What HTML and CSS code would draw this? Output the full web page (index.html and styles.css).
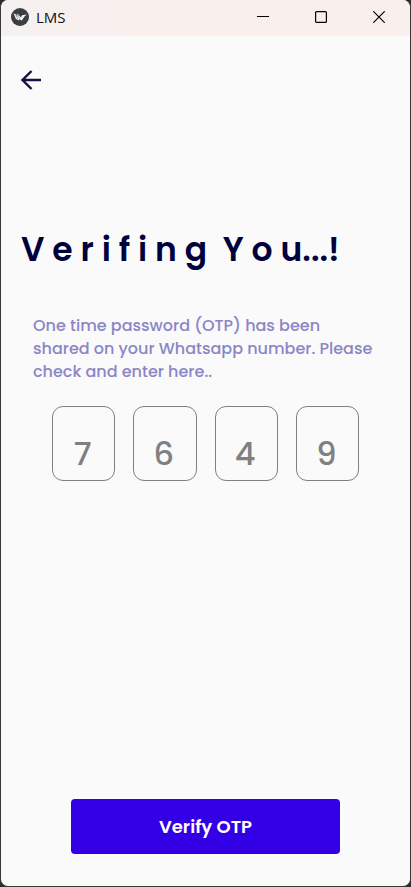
FILE: index.html
```html
<!DOCTYPE html>
<html lang="en">
<head>
<meta charset="utf-8">
<meta name="viewport" content="width=device-width, initial-scale=1">
<title>LMS</title>
<link rel="stylesheet" href="styles.css">
</head>
<body>
<div class="window">
  <header class="titlebar">
    <svg class="logo" viewBox="0 0 18 18" aria-hidden="true">
      <circle cx="9" cy="9" r="9" fill="#3c3f42"/>
      <path d="M2.6 5.5 5 6.2 6.5 9 6.3 5.2 10 9.5 11 7.2 15.8 6.6 13.5 8.6 10.8 12.4 8.2 11.2 7.6 12.6 4.8 10.8Z" fill="#f4f4f4"/>
      <path d="M4.4 6.2 6.8 11.2M7.1 6.4 8.6 10.6" stroke="#777" stroke-width=".5" fill="none"/>
    </svg>
    <span class="app-name">LMS</span>
    <div class="controls">
      <button type="button" aria-label="Minimize"><svg viewBox="0 0 12 12"><path d="M0 5.5h12"/></svg></button>
      <button type="button" aria-label="Maximize"><svg viewBox="0 0 12 12"><rect x=".6" y=".6" width="10.8" height="10.8" rx="1"/></svg></button>
      <button type="button" aria-label="Close"><svg viewBox="0 0 12 12"><path d="M.3.3l11.4 11.4M11.7.3.3 11.7"/></svg></button>
    </div>
  </header>
  <main class="screen">
    <button class="back" type="button" aria-label="Back">
      <svg viewBox="0 0 20 20"><path d="M20 10H1.5M10.5 1 1.5 10l9 9"/></svg>
    </button>
    <h1>V e r i f i n g &nbsp;Y o u...!</h1>
    <p class="hint">One time password (OTP) has been shared on your Whatsapp number. Please check and enter here..</p>
    <form class="otp-form">
      <div class="digits">
        <input type="text" inputmode="numeric" maxlength="1" value="7" aria-label="Digit 1">
        <input type="text" inputmode="numeric" maxlength="1" value="6" aria-label="Digit 2">
        <input type="text" inputmode="numeric" maxlength="1" value="4" aria-label="Digit 3">
        <input type="text" inputmode="numeric" maxlength="1" value="9" aria-label="Digit 4">
      </div>
      <button class="verify" type="submit">Verify OTP</button>
    </form>
  </main>
</div>
</body>
</html>
```
FILE: styles.css
```css
* {
  box-sizing: border-box;
}

body {
  margin: 0;
  background: #2b2b2d;
  font-family: Poppins, Inter, "Open Sans", sans-serif;
  font-weight: 500;
}

button {
  border: 0;
  padding: 0;
  background: none;
  font: inherit;
}

.window {
  display: flex;
  flex-direction: column;
  min-height: 100vh;
  border: 1px solid #38383a;
  border-top: 0;
  border-radius: 8px;
  background: #fafafa;
  overflow: hidden;
}

.titlebar {
  display: flex;
  align-items: center;
  height: 36px;
  padding: 0 2px 2px 10px;
  background: linear-gradient(90deg, #f4f1f0, #f9f0ee 30%);
}

.logo {
  width: 18px;
  height: 18px;
}

.app-name {
  margin-left: 7px;
  font: 15px/20px "Open Sans", sans-serif;
  color: #111;
}

.controls {
  display: flex;
  margin-left: auto;
}

.controls button {
  display: grid;
  place-items: center;
  width: 58px;
  height: 34px;
}

.controls svg {
  width: 12px;
  height: 12px;
  fill: none;
  stroke: #000;
  stroke-width: 1.2;
}

.screen {
  display: flex;
  flex: 1;
  flex-direction: column;
  padding: 32px 20px;
}

.back {
  width: 24px;
  height: 24px;
}

.back svg {
  display: block;
  width: 20px;
  height: 20px;
  fill: none;
  stroke: #1a0f42;
  stroke-width: 2.4;
}

h1 {
  margin: 133px 0 0;
  font-size: 33px;
  font-weight: 600;
  line-height: 50px;
  color: #00003c;
}

.hint {
  margin: 39px 12px 0;
  font-size: 16px;
  line-height: 23px;
  color: #8a86c6;
}

.otp-form {
  display: flex;
  flex: 1;
  flex-direction: column;
}

.digits {
  display: grid;
  grid-template-columns: repeat(4, 1fr);
  gap: 18px;
  margin: 23px 31px;
}

.digits input {
  width: 100%;
  height: 75px;
  padding: 20px 2px 0 0;
  border: 1px solid #808080;
  border-radius: 11px;
  background: none;
  font: 500 32px/48px Poppins, Inter, sans-serif;
  text-align: center;
  color: #808080;
}

.verify {
  width: 73%;
  height: 55px;
  margin: auto auto 0;
  border-radius: 4px;
  background: #3300e6;
  font-size: 18px;
  font-weight: 600;
  color: #fff;
}
```
